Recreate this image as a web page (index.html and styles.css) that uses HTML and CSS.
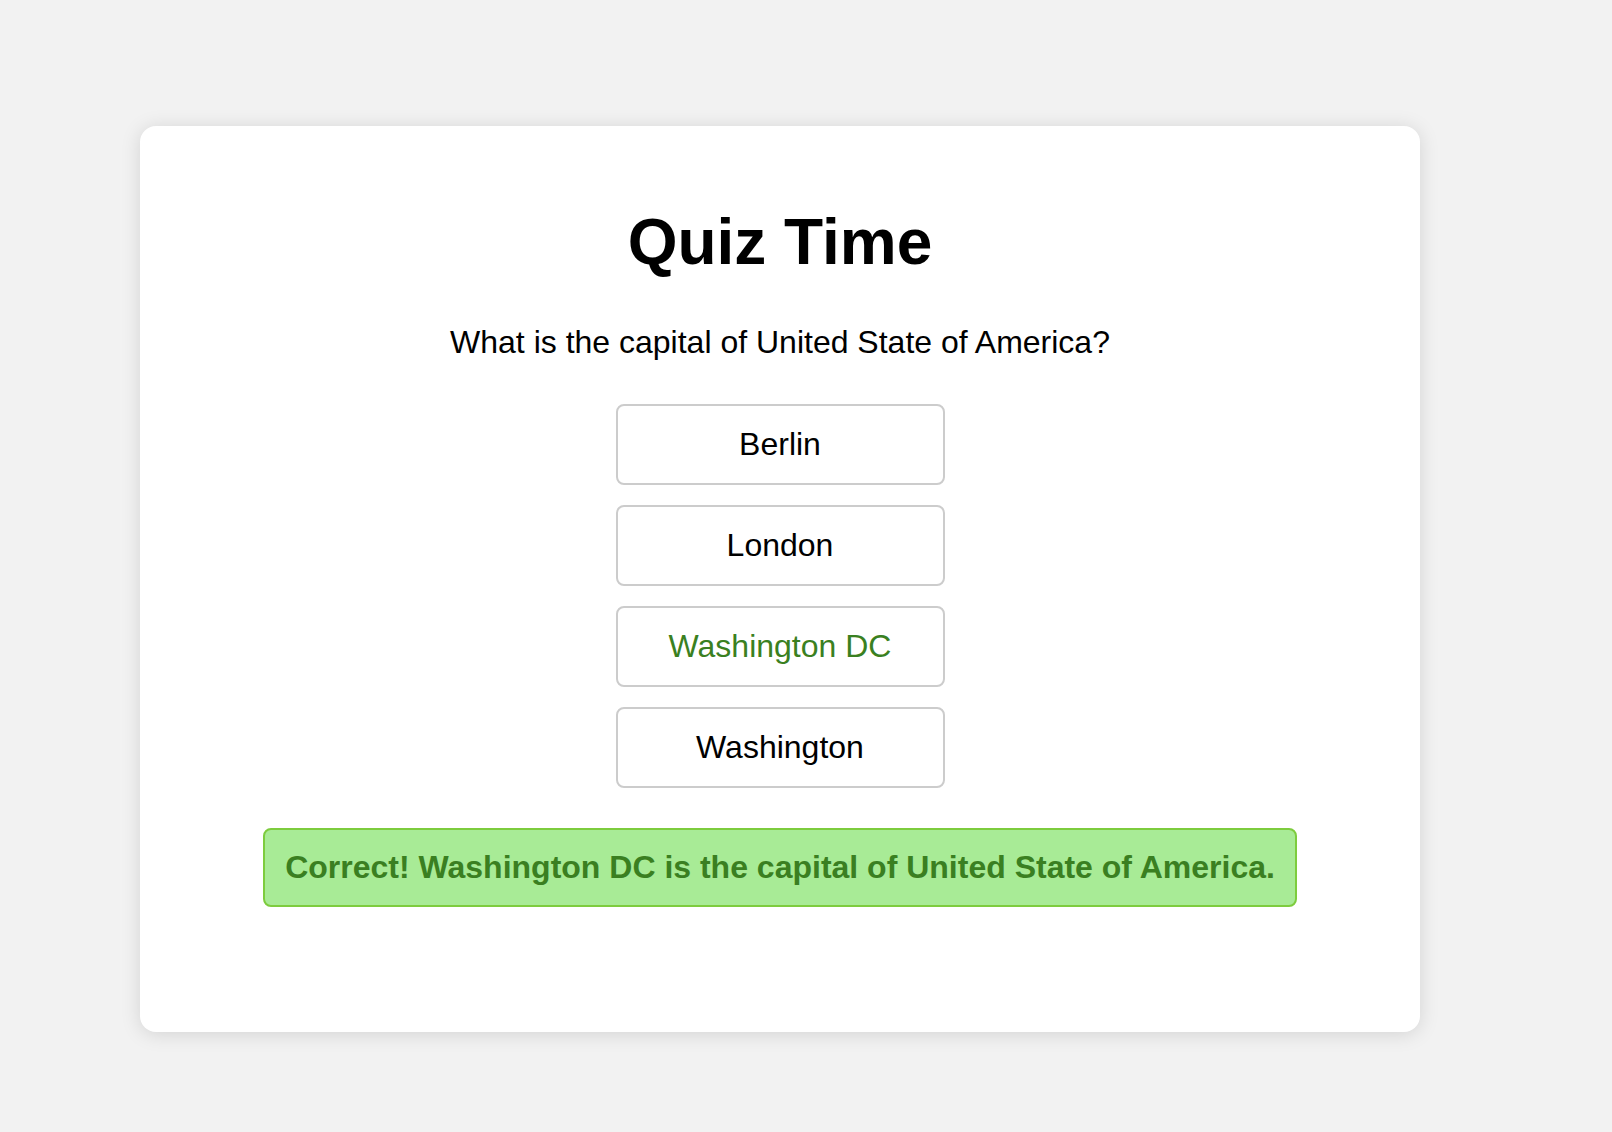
FILE: index.html
```html
<!DOCTYPE html>
<html lang="en">
<head>
<meta charset="utf-8">
<title>Quiz Time</title>
<link rel="stylesheet" href="styles.css">
</head>
<body>
<main class="page">
  <section class="card">
    <h1 class="title">Quiz Time</h1>
    <p class="question">What is the capital of United State of America?</p>
    <div class="answers">
      <button class="answer">Berlin</button>
      <button class="answer">London</button>
      <button class="answer answer-correct">Washington DC</button>
      <button class="answer">Washington</button>
    </div>
    <div class="feedback">Correct! Washington DC is the capital of United State of America.</div>
  </section>
</main>
</body>
</html>
```

FILE: styles.css
```css
html, body {
  margin: 0;
  padding: 0;
  background: #f2f2f2;
  font-family: "Liberation Sans", Arial, Helvetica, sans-serif;
  color: #000;
}

.page {
  padding: 126px 0 100px 140px;
}

.card {
  box-sizing: border-box;
  width: 1280px;
  height: 906px;
  background: #fff;
  border-radius: 16px;
  box-shadow: 0 2px 20px rgba(0, 0, 0, 0.13);
  display: flex;
  flex-direction: column;
  align-items: center;
  padding-top: 79px;
}

.title {
  margin: 0;
  font-size: 64px;
  font-weight: bold;
  line-height: normal;
}

.question {
  margin: 45px 0 0;
  font-size: 32px;
  line-height: normal;
}

.answers {
  margin-top: 43px;
  display: flex;
  flex-direction: column;
  gap: 20px;
}

.answer {
  box-sizing: border-box;
  width: 329px;
  height: 81px;
  padding: 0;
  background: #fff;
  border: 2px solid #cccccc;
  border-radius: 8px;
  font-family: inherit;
  font-size: 32px;
  color: #000;
  text-align: center;
  cursor: pointer;
}

.answer-correct {
  color: #3a8021;
}

.feedback {
  margin-top: 40px;
  box-sizing: border-box;
  height: 79px;
  padding: 0 20px;
  display: flex;
  align-items: center;
  background: #a8eb96;
  border: 2px solid #7dcc3e;
  border-radius: 8px;
  color: #3a7f21;
  font-size: 32px;
  font-weight: bold;
}
```
